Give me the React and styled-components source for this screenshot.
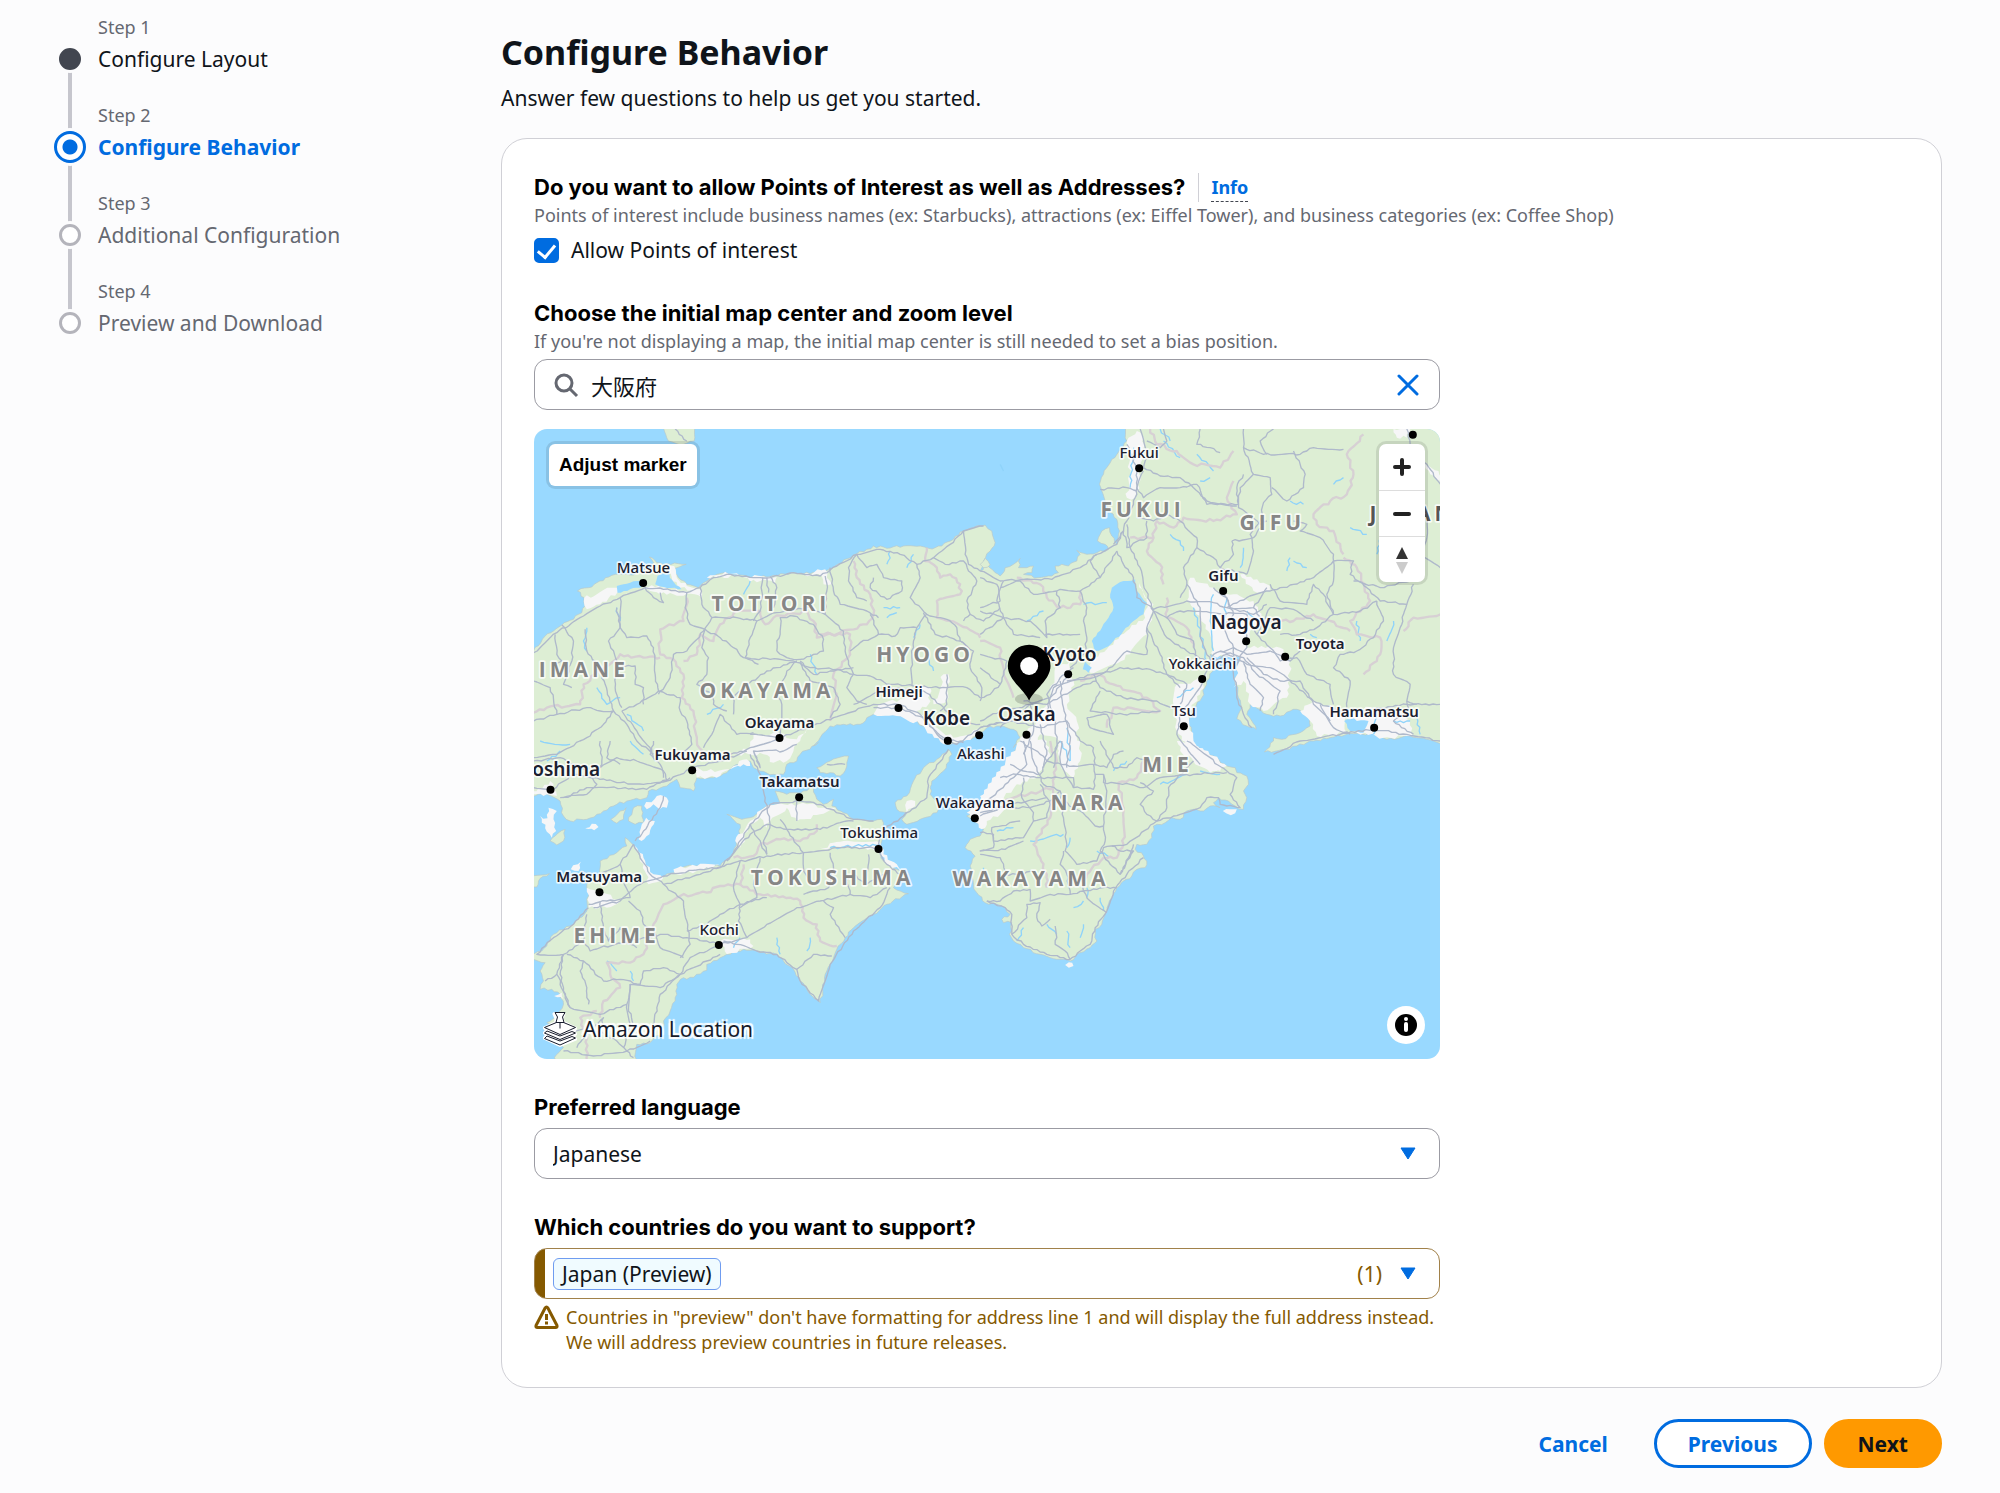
import { useState } from 'react';
import styled, { createGlobalStyle, css } from 'styled-components';

const steps = [
  { title: 'Configure Layout', status: 'done' },
  { title: 'Configure Behavior', status: 'current' },
  { title: 'Additional Configuration', status: 'todo' },
  { title: 'Preview and Download', status: 'todo' },
];

/* ---------- map data ---------- */

// The map is split in four quadrants, each with its own origin.
const parse = (text, dx = 0, dy = 0) =>
  text.trim().split(/\s+/).map((pair) => {
    const [x, y] = pair.split(',').map(Number);
    return [x + dx, y + dy];
  });
const nw = (text) => parse(text);
const ne = (text) => parse(text, 1380, 0);
const sw = (text) => parse(text, 0, 960);
const se = (text) => parse(text, 1380, 960);

// Breaks every segment into short pieces and nudges them, for a natural line
const roughen = (points, amount, closed) => {
  const out = [];
  const count = closed ? points.length : points.length - 1;
  for (let i = 0; i < count; i++) {
    const [x1, y1] = points[i];
    const [x2, y2] = points[(i + 1) % points.length];
    const length = Math.hypot(x2 - x1, y2 - y1);
    const parts = Math.max(1, Math.round(length / 11));
    for (let k = 0; k < parts; k++) {
      const t = k / parts;
      const seed = Math.sin(x1 * 12.9 + y1 * 78.2 + k * 37.7) * 43758.5;
      const nudge = k === 0 ? 0 : (seed - Math.floor(seed) - 0.5) * 2 * amount;
      const nx = length ? (y1 - y2) / length : 0;
      const ny = length ? (x2 - x1) / length : 0;
      out.push([x1 + (x2 - x1) * t + nx * nudge, y1 + (y2 - y1) * t + ny * nudge]);
    }
  }
  if (!closed) out.push(points[points.length - 1]);
  return out;
};
const toPath = (points, amount = 0, closed = false) =>
  'M' + roughen(points, amount, closed).map(([x, y]) => `${Math.round(x)} ${Math.round(y)}`).join('L') + (closed ? 'Z' : '');

const honshu = [
  ...nw('20,700 40,690 62,665 75,645 100,630 125,612 150,598 185,575 195,555 192,530 172,510 205,500 230,485 275,463 330,462 390,440 400,425 388,408 410,425 440,428 498,430 470,440 456,445 475,470 500,490 535,500 550,485 580,465 615,455 660,462 700,468 750,467 815,455 870,458 910,455 945,435 1000,402 1040,385 1060,375 1100,382 1150,375 1200,375 1225,382 1265,375 1300,355 1330,330 1360,320 1395,312 1415,330 1425,365 1410,390 1390,420 1405,430 1385,440'),
  ...ne('0,450 20,430 45,455 60,465 75,440 100,430 120,412 115,440 140,440 160,435 155,455 130,460 175,470 215,465 235,455 225,435 245,430 265,435 290,420 300,400 290,388 320,400 350,395 385,385 375,370 352,360 365,330 388,320 395,345 410,370 418,330 410,295 385,265 375,240 358,190 370,160 395,115 420,85 440,60 430,10 1400,10 1400,975 1340,955 1290,945 1220,955 1180,938 1120,938 1050,950 1000,960 950,975 915,985 853,993 880,960 880,950 905,955 960,935 990,915 985,885 950,865 930,870 900,885 860,880 830,862 810,850 800,880 815,900 828,925 800,915 770,893 785,860 775,830 765,780 780,740 790,700 760,710 720,705 690,700 700,740 680,780 665,830 635,870 625,900 635,940'),
  ...se('630,10 670,30 700,45 740,75 765,80 770,95 800,105 805,130 790,150 800,170 790,205 765,195 745,180 715,170 700,185 720,200 690,195 670,210 640,205 620,210 600,235 575,230 555,245 520,255 515,290 500,310 470,310 465,325 490,345 500,360 495,380 470,385 455,405 430,420 410,440 395,470 380,510 365,550 345,565 350,600 330,620 300,635 270,660 230,655 180,640 130,620 100,600 88,580 95,545 70,545 65,535 90,520 75,500 50,490'),
  ...sw('1395,485 1370,455 1360,430 1350,375 1365,345 1335,320 1350,295 1380,285 1390,265 1360,235 1340,225 1370,210 1400,170 1440,125'),
  ...se('90,70 95,40 120,0'),
  ...ne('100,980 120,950 100,925 60,915 20,920'),
  ...nw('1376,942 1330,960 1290,970 1270,965 1240,940 1210,915 1180,895 1140,885 1100,880 1060,880 1040,890 1020,910 970,910 930,915 900,950 880,975'),
  ...sw('895,5 840,40 830,60 800,70 790,100 760,100 720,90 700,80 690,60 640,75 620,95 570,110 530,110 520,150 480,140 470,115 440,135 385,150 380,170 320,180 290,190 250,210 230,220 200,235 150,240 130,225 120,180 80,160 20,165'),
];

const shikoku = sw('20,650 65,630 100,580 160,550 200,510 205,450 200,430 240,400 240,360 290,335 320,315 315,290 345,320 370,360 385,400 420,410 460,395 500,375 550,380 600,375 640,335 655,290 660,250 620,220 665,235 690,230 740,195 780,190 765,150 800,160 850,150 880,140 890,175 910,190 940,175 935,195 970,215 1000,235 1060,240 1085,235 1090,270 1085,300 1075,330 1090,360 1130,385 1165,400 1120,440 1165,458 1100,490 1060,520 1000,560 975,590 950,625 930,670 915,700 900,785 870,760 840,720 820,685 790,660 770,640 710,630 670,625 620,640 600,650 560,670 560,688 500,715 490,710 470,730 465,780 450,810 430,840 425,870 390,905 350,910 345,970 100,970 110,940 130,920 95,895 85,870 100,855 80,845 110,820 130,790 120,760 95,745 60,745 70,720 60,690 75,665 40,655');

const islands = [
  nw('430,10 525,10 522,60 490,70 445,60'),
  nw('1380,430 1395,412 1410,432 1390,440'),
  sw('1285,25 1295,40 1270,90 1235,120 1230,160 1260,190 1250,215 1200,235 1160,250 1145,235 1160,215 1130,205 1125,185 1160,165 1180,120 1210,80 1250,55'),
  sw('890,80 930,60 985,45 980,75 960,105 930,95 900,95'),
  sw('272,235 300,210 318,200 310,235 290,247'),
  sw('325,240 340,200 365,195 370,245 345,250'),
  sw('90,300 105,285 135,265 130,300 110,312'),
  sw('30,410 88,398 60,412 50,438 30,440'),
];

const sandyIslands = [
  sw('60,225 82,232 85,200 110,210 100,235 108,270 95,290 75,262'),
  sw('410,165 440,170 440,200 418,205 400,190 380,205 372,195'),
  sw('378,230 404,240 390,268 372,295 355,295 362,262'),
  sw('195,262 215,248 235,258 222,268'),
  sw('152,385 182,362 175,390'),
  sw('102,765 125,755 130,775'),
  se('728,210 770,205 765,217 738,217'),
  se('255,672 266,664 280,675 266,680'),
];

const lakes = [
  ne('395,500 430,480 465,475 470,510 500,545 490,580 460,600 430,630 400,660 375,680 345,690 335,660 365,620 385,590 400,560 390,530'),
  ne('315,722 335,740 325,755 308,745'),
  nw('290,495 330,485 372,478 368,495 330,505 292,515'),
  nw('405,490 412,465 440,452 462,485 484,505 430,498'),
  ne('1092,900 1120,890 1130,900 1165,900 1150,935 1110,930'),
];

const cityAreas = [
  nw('192,530 230,520 275,500 300,510 240,550 200,565'),
  nw('375,498 425,500 490,510 540,505 545,530 500,518 460,520 400,512'),
  nw('440,440 462,435 470,470 500,495 530,500 535,520 480,500 455,470'),
  nw('560,470 615,452 660,465 600,465'),
  nw('670,468 770,468 765,485 740,478 690,482'),
  nw('850,460 915,445 935,490 910,490 905,465'),
  nw('640,1000 690,975 700,940 760,935 830,955 860,925 840,960 820,990 800,1020 760,1025 730,1000'),
  nw('1060,880 1075,850 1140,835 1200,800 1230,800 1225,850 1190,870 1250,920 1300,950 1380,925 1380,942 1330,960 1270,970 1200,910 1130,885'),
  nw('1240,850 1270,760 1285,760 1280,840'),
  ne('440,60 470,30 490,50 480,180 465,230 440,230 450,160'),
  ne('470,475 490,520 520,550 500,640 450,700 400,730 330,755 335,720 380,685 440,630 495,590 500,545'),
  ne('225,740 270,720 280,780 260,850 290,900 295,1000 270,1030 240,1000 230,950 180,940 165,1030 130,1030 120,950 170,900 210,840'),
  ne('630,470 700,500 760,520 820,540 850,600 810,630 800,680 900,680 930,720 920,830 850,870 810,850 790,780 760,800 780,710 700,705 690,640 640,560 620,540'),
  ne('780,460 860,490 880,510 820,510'),
  ne('590,790 640,780 680,760 660,820 620,880 640,960 690,1010 730,1030 720,1050 640,1010 590,930 580,850'),
  ne('960,870 1000,840 1060,860 1090,870 1100,935 1010,945 990,900'),
  ne('1090,870 1180,860 1250,870 1290,900 1300,945 1210,950 1130,935'),
  ne('1240,24 1290,24 1280,50 1250,50'),
  ne('1335,130 1375,150 1385,190 1350,160'),
  sw('520,80 560,90 620,85 680,55 690,75 640,75 600,105 530,110'),
  sw('200,440 250,455 300,480 260,500 205,500'),
  sw('345,315 375,360 400,400 430,410 385,430 370,370'),
  sw('460,385 540,368 600,372 540,388 470,400'),
  sw('645,300 690,240 740,195 790,190 860,190 950,205 900,220 830,240 800,200 750,240 740,260 720,230 690,250 660,320'),
  sw('900,320 970,300 1080,305 1090,340 1130,370 1165,400 1100,370 1075,325 1000,320'),
  sw('600,600 660,595 690,595 700,615 620,640'),
  sw('30,160 90,120 110,165 70,165'),
  sw('1160,180 1185,180 1185,195 1160,215'),
  sw('1340,215 1440,120 1500,60 1500,120 1430,190 1470,200 1400,240 1385,265 1360,235'),
  se('0,165 120,0 200,0 210,40 170,110 80,140 0,200'),
  se('235,0 300,0 300,60 280,110 240,70'),
  se('590,0 625,0 700,45 740,75 690,95 640,60 600,30'),
];

const roads = [
  // north west
  nw('40,695 110,635 180,590 240,555 300,530 375,500 430,505 500,515 540,500 580,470 620,460 700,470 750,470 820,455 900,465 950,435 1010,400 1080,385 1140,400 1190,430 1240,410 1290,370 1330,330 1390,315'),
  nw('375,500 400,530 430,545 420,515'),
  nw('105,640 110,700 125,720 100,730'),
  nw('195,625 200,690 235,740 255,790 280,870'),
  nw('125,612 160,660 155,720 130,790 155,800'),
  nw('290,560 300,620 265,660 290,720 285,800 305,860'),
  nw('300,530 300,620 320,650 380,645 400,680 405,760 415,810 385,830 350,850 305,870'),
  nw('40,780 90,800 110,880 40,900'),
  nw('110,880 200,860 240,870 280,870 250,910 200,950 110,1000 40,1010'),
  nw('280,870 320,910 350,960 400,1000'),
  nw('305,870 350,930 390,980 400,1010'),
  nw('415,810 440,820 480,830 480,870 500,900 515,970 470,1010'),
  nw('305,735 345,735 345,790 370,800 370,850'),
  nw('500,515 495,560 510,610 555,625 600,650 640,680 670,710 750,715 820,720 870,740 950,745 1000,760 1050,765 1110,790 1180,795 1280,800 1340,800 1380,830'),
  nw('540,500 545,550 575,590 650,590 710,600 770,575 870,560 915,580'),
  nw('710,600 690,650 675,710 715,730'),
  nw('575,590 550,630 500,690 460,700 450,770 415,820'),
  nw('555,625 545,680 565,710 560,760 530,790 575,820 580,850 620,870'),
  nw('728,470 725,510 720,570 700,600'),
  nw('740,470 745,515'),
  nw('770,690 800,710 840,715 910,690 910,655 880,610 820,585 780,590 780,640 770,660 770,690'),
  nw('915,465 920,510 915,580 970,630 975,690 985,730 1000,760 980,800 1010,840 1040,850'),
  nw('750,467 770,500 760,560'),
  nw('1010,400 1040,440 1070,430 1090,470 1145,480 1145,510 1100,535 1050,500 1060,470'),
  nw('1010,400 985,440 985,480 1010,530 1040,540'),
  nw('930,440 940,510 960,550 1040,570 1075,590'),
  nw('1190,430 1200,470 1170,530 1220,580 1280,595 1310,620 1320,660 1345,680'),
  nw('1240,410 1275,430 1330,420 1345,450 1370,480 1340,540 1350,580 1330,600'),
  nw('1330,330 1335,400 1345,430 1380,450'),
  nw('1350,580 1390,600 1440,560'),
  nw('1220,580 1190,620 1180,660 1175,710 1175,795'),
  nw('1050,580 1075,640 1125,645 1140,620 1190,620'),
  nw('1075,640 1020,665 990,690'),
  nw('1210,575 1245,640 1290,650 1320,660 1360,690 1350,740 1385,800 1380,840'),
  nw('780,940 785,850 770,820 800,750 830,720'),
  nw('640,880 640,830 670,800 740,750 830,720'),
  nw('840,720 880,760 930,750 1000,740'),
  nw('840,725 870,780 940,800 960,850 930,890'),
  nw('700,935 650,940 600,880 580,930 550,980'),
  nw('690,940 780,950 860,920 940,890 1060,850 1135,850 1200,880 1260,950 1310,970 1380,920 1440,905'),
  nw('1060,860 1135,860 1210,890 1270,950 1330,965'),
  nw('1000,850 1100,800 1210,810 1260,850 1310,900 1380,910'),
  nw('1280,760 1280,850 1260,870'),
  nw('630,1000 680,985 780,950'),
  nw('465,24 500,60'),
  // north east
  ne('440,70 470,140 470,220 440,300 410,370 350,400 300,440 215,475 130,475 60,480 0,450'),
  ne('480,24 500,100 490,140 540,165 600,170 640,200 680,240 770,255'),
  ne('500,60 540,80 560,60 550,24'),
  ne('660,24 650,70 690,80 720,95'),
  ne('490,150 470,200 490,230 540,200 600,200 650,190 680,250 775,250 770,200 790,160'),
  ne('360,205 440,200 470,210'),
  ne('790,24 790,80 820,160 870,170 875,220 850,245 840,300 810,340 820,390 800,460'),
  ne('790,80 850,100 960,100 1000,80 1090,85'),
  ne('860,100 840,60 880,24'),
  ne('820,160 780,200 775,260 840,310 860,300'),
  ne('875,200 920,240 970,200 975,160 940,90'),
  ne('470,290 520,300 560,280 600,300 650,350 650,380 700,410 720,440 800,460'),
  ne('500,300 500,350 440,380 430,330 400,370'),
  ne('440,310 450,380 480,440 490,490 520,570 500,620 500,700 440,690 380,750 300,770 220,800 200,870'),
  ne('410,390 430,430 460,470 470,530 520,565 620,540 700,545 740,560 820,560 860,500'),
  ne('520,570 560,590 600,570 690,575 800,580 830,640'),
  ne('0,560 60,540 50,490 0,470'),
  ne('70,480 50,540 70,590 100,640 180,650'),
  ne('70,590 0,640'),
  ne('60,500 120,480 160,520 240,505 300,510 360,470 410,390'),
  ne('0,570 70,590 150,600 200,650 195,600 240,560 230,510'),
  ne('300,510 320,560 310,600 320,660 310,700 270,740'),
  ne('360,470 330,420 350,400'),
  ne('195,640 260,640 300,640'),
  ne('650,380 610,440 620,490 600,530'),
  ne('755,360 760,400 720,440'),
  ne('755,360 820,350 850,310'),
  ne('940,300 980,310 960,330 1020,350 1060,400 1060,420 1000,470 940,490 870,510 800,530 740,560'),
  ne('1060,420 1120,420 1110,460 1160,500 1200,540 1280,550 1300,490'),
  ne('870,490 900,540 980,550 1000,490 1030,520 1060,580 1140,570 1190,540'),
  ne('1060,420 1060,480 1040,520 1060,580 1010,620 960,640 900,640'),
  ne('1280,550 1260,620 1240,680 1240,760 1290,790 1280,840 1310,850'),
  ne('1190,540 1210,600 1180,650 1130,690 1080,700 1060,740 1110,780 1100,860'),
  ne('1345,290 1340,350 1325,400 1381,440'),
  ne('1325,400 1310,450 1290,480 1200,500 1120,480'),
  ne('820,560 850,600 870,560 940,565 1000,600'),
  ne('850,600 830,640 870,680 900,720 950,710 980,760 1050,790 1060,850'),
  ne('620,490 660,560 660,640 690,720 700,700 760,680 800,700 870,690 930,720 960,690'),
  ne('700,500 740,530 760,580 730,620 760,680 760,740 800,680 800,620'),
  ne('730,510 750,560 820,580 860,550'),
  ne('720,690 790,710 830,760 900,810 880,880'),
  ne('700,720 740,700 800,730 870,740 920,770 1000,840 1080,870 1180,865 1280,850 1381,850'),
  ne('790,720 810,790 850,830 840,870'),
  ne('800,710 850,760 900,780 960,780 1000,850 1050,900'),
  ne('760,740 770,830 790,880 815,920'),
  ne('690,720 665,790 630,840 600,880 590,940 620,980 660,1030'),
  ne('520,570 560,650 620,690 680,720'),
  ne('560,590 590,640 640,660 650,720'),
  ne('500,620 540,700 560,760 620,790 600,850'),
  ne('260,780 340,770 420,740 510,745 560,760 600,800'),
  ne('340,760 360,800 430,830 530,840 590,870'),
  ne('360,810 330,870 430,880 540,870'),
  ne('320,890 380,880 400,940 330,920 320,890'),
  ne('220,880 200,820 240,770 280,740'),
  ne('130,840 200,850 290,800 350,780'),
  ne('60,920 150,850 210,830 260,770'),
  ne('0,920 90,900 180,920 260,900 300,960'),
  ne('0,740 60,790 30,820 0,830'),
  ne('0,700 80,720 60,790'),
  ne('0,900 60,870 160,850'),
  ne('180,910 200,1000 190,1040'),
  ne('220,880 230,960 220,1040'),
  ne('150,850 160,930 130,1000'),
  ne('240,780 250,860 270,960 260,1040'),
  ne('880,1000 960,960 1080,940 1180,925 1280,940 1381,960'),
  ne('1020,850 1060,920 1110,940'),
  ne('1280,840 1290,870 1240,900 1300,940'),
  ne('1280,24 1290,70 1340,130 1381,190'),
  // south west
  sw('40,140 90,150 160,100 230,110 300,125 370,130 440,120 520,80 600,60 680,30'),
  sw('40,60 120,50 200,90 230,130 200,160 120,170'),
  sw('130,170 200,140 260,140 380,145 450,110'),
  sw('240,0 245,60 230,110'),
  sw('240,80 290,50 350,60 430,90 440,120'),
  sw('270,0 260,50 300,70'),
  sw('400,0 390,40 420,70 430,110'),
  sw('690,40 720,100 735,170 750,250'),
  sw('700,30 720,80 700,30 790,30 830,10'),
  sw('240,400 300,370 340,310'),
  sw('345,300 370,270 420,200 430,165'),
  sw('300,370 310,420 330,470 260,480 205,490'),
  sw('340,310 390,400 430,430 540,400 620,370 740,345 850,335 960,320 1075,320'),
  sw('220,500 300,480 360,430 430,405 540,385 600,380 640,335 690,250 750,190 840,180 900,190 1000,235 1060,240'),
  sw('620,360 690,280 740,250 800,265 900,265 960,245 1000,240'),
  sw('690,250 740,340'),
  sw('750,250 730,300 740,340'),
  sw('780,235 800,265 830,310 850,335 850,380 870,430'),
  sw('830,180 830,240'),
  sw('930,335 940,380 925,440 890,450 850,460'),
  sw('660,360 640,440 660,490 655,540 680,590'),
  sw('720,350 700,430 710,470 660,500'),
  sw('430,430 490,480 500,540 510,610 480,650'),
  sw('325,480 360,510 370,550 400,570 420,620 490,650'),
  sw('205,500 160,550 100,590 50,640 130,640 190,600 200,520'),
  sw('240,480 250,560 265,600 300,560 310,600 350,620'),
  sw('190,600 210,630 240,620 330,600 370,590 420,580 500,590 560,600 600,610'),
  sw('500,570 560,550 600,520 660,490 740,470'),
  sw('600,610 680,590 740,550 830,500 900,480 990,460 1050,470 1100,440'),
  sw('610,600 650,610 710,630 770,640 800,665 830,685 840,720 895,780 930,670 1000,570 1080,500 1110,440'),
  sw('830,685 880,640 935,645'),
  sw('910,480 940,500 930,520 960,570 975,590'),
  sw('990,460 980,420 1000,400 1040,430 1090,400'),
  sw('1040,430 1045,340'),
  sw('130,640 110,700 150,800 240,820 320,790 330,730 420,740 480,700 600,640'),
  sw('140,640 190,660 250,720 300,715 360,730 370,690 430,680 480,700'),
  sw('130,640 120,700 130,750 150,800'),
  sw('190,660 180,690 200,740 205,790'),
  sw('330,730 325,800 340,860 400,860 410,800 420,760 480,700 510,650 590,615'),
  sw('150,870 220,860 250,830 240,870 290,900 320,930 340,950'),
  sw('320,790 330,850 310,920'),
  sw('110,700 75,720'),
  sw('130,930 220,945 320,930 390,900'),
  sw('170,920 200,880 240,870'),
  sw('1285,25 1225,110 1220,170 1150,225 1085,270 1070,320 1100,370 1140,400'),
  sw('920,70 975,70'),
  // south east
  se('150,0 160,60 190,130 240,150 250,230 260,310 255,330 290,370 350,360 370,320 440,310 530,240 560,200 565,140 620,80 640,60'),
  se('120,0 180,40 200,60 280,75 340,70 380,80 400,40 430,30'),
  se('90,70 130,90 180,100 200,60 230,20 240,0'),
  se('60,110 110,100 170,110 280,110 280,140 340,145 345,100'),
  se('340,70 345,100 370,100 370,125 450,130 490,140 540,110 640,100 740,95'),
  se('245,0 240,60 260,110 280,140'),
  se('300,0 340,20 345,70'),
  se('360,0 400,80 440,80 470,50 500,60'),
  se('480,125 520,150 480,190 500,220 530,240'),
  se('530,240 600,220 660,200 680,170 715,170 720,190 780,200 750,160 770,110 740,90 620,0'),
  se('20,180 100,110 140,70 130,0'),
  se('0,225 60,200 150,200 210,180 240,150'),
  se('0,215 90,190 200,170'),
  se('130,110 125,170 160,215 160,240 200,230 210,190 180,130'),
  se('250,180 300,210 345,255 370,255 380,150 370,100'),
  se('370,255 375,300 360,330 390,370 420,400'),
  se('160,240 130,290 40,300 35,260 120,240'),
  se('0,275 40,280 40,320 0,330 75,325 130,300'),
  se('0,340 60,350 75,390'),
  se('75,400 120,400 160,390'),
  se('395,315 420,330 460,330 420,400 450,340 460,310'),
  se('250,330 240,370 260,400 270,460'),
  se('20,480 60,480 100,450 150,445 150,480 210,460 270,460 310,450 330,480 380,515'),
  se('20,480 75,500 95,520 95,580 130,610 200,640 270,655 300,630 330,610 345,560 380,510 400,450 440,400 490,350'),
  se('95,580 140,530 140,490 180,485 170,530 185,555 210,535'),
  se('225,555 230,590 225,610 255,630 270,655'),
  se('310,450 370,440 410,440'),
  se('300,400 310,430 310,450'),
];

const borders = [
  nw('500,530 490,600 420,625 420,700 460,715 490,760 485,830 520,870 530,960 560,1020'),
  nw('420,710 370,710 300,700 250,740 190,790 180,850 80,860 40,875'),
  nw('490,720 530,700 540,640 580,660 600,610 650,570 720,570 735,610 760,590 860,570 880,600 890,650 960,635 1040,610 1060,580 1050,520 1010,470 1000,420'),
  nw('900,640 990,640 990,700 940,760 950,820 930,900'),
  nw('1220,380 1215,420 1250,440 1260,470 1290,460 1320,490 1320,520 1250,540 1250,590 1290,600 1340,620 1380,650'),
  ne('0,660 60,680 70,760 100,830'),
  ne('110,470 180,490 200,530 240,560 300,550 300,510'),
  ne('510,24 530,70 590,90 640,130 720,140 760,90'),
  ne('760,180 740,230 770,280 700,300 610,290 580,320 530,300 520,350 450,350'),
  ne('520,350 500,390 540,430 550,490'),
  ne('1150,40 1100,100 1120,160 1100,220 1050,240 1000,280 1010,310 1060,330 1090,400'),
  ne('1090,410 1130,440 1170,540 1110,600 1130,640 1200,650 1200,700 1150,760'),
  ne('560,530 560,590 620,620 640,680'),
  ne('850,600 940,600 1000,580 1110,630'),
  ne('300,780 350,760 400,790 500,830 540,870 400,860 380,920'),
  ne('1381,580 1300,590 1270,630'),
  se('210,0 230,60 220,130 210,230 160,310 180,350 200,400 200,440'),
  se('490,60 470,110 415,125 430,200 430,310 410,350 370,350 320,400 310,440'),
  se('0,190 100,170 220,140'),
  sw('640,350 700,345 720,310 780,295 840,300 890,270 890,250'),
  sw('670,370 660,430 600,435 560,455 480,465 430,490 400,550 370,640 330,665 260,665 270,700 300,740 250,780 240,830'),
  sw('660,430 720,460 810,470 840,480 850,530 890,550 900,600 950,615'),
  sw('230,810 180,830 200,880 200,960'),
];

const streams = [
  nw('200,620 190,660 200,690'), nw('290,560 300,600'), nw('320,880 370,930'), nw('230,800 260,850 300,830'),
  nw('690,480 670,520'), nw('1110,390 1100,430'), nw('1090,560 1140,560'), nw('1100,590 1130,575'),
  nw('560,880 610,850'), nw('1180,400 1160,440'), nw('1220,700 1240,750'), nw('870,700 890,760'), nw('1200,610 1180,650'),
  ne('570,340 600,360 610,390'), ne('930,410 920,450'), ne('940,420 980,440'), ne('1110,320 1160,340'), ne('1060,190 1090,170'),
  ne('540,24 570,60'), ne('650,100 700,150'), ne('660,180 690,170'), ne('790,380 780,440'), ne('1200,350 1190,400'),
  ne('1240,600 1220,660'), ne('1130,600 1140,660'), ne('310,550 380,545'), ne('140,600 190,570'), ne('640,560 680,720'),
  ne('700,520 690,600 700,690'), ne('740,530 730,620'), ne('1180,940 1190,870'), ne('1240,900 1290,900'), ne('1310,890 1320,940'),
  ne('460,80 450,200'), ne('550,60 600,110'), ne('930,240 970,250'), ne('800,570 840,600'), ne('590,830 640,800'), ne('260,920 270,1020'),
  ne('990,640 1010,650'), ne('1050,680 1080,660'), ne('60,130 70,150'),
  sw('60,0 150,10'), sw('80,60 120,30'), sw('260,660 290,690'), sw('770,590 780,640'), sw('870,590 860,630'),
  sw('330,690 340,720'), sw('930,320 1080,310'), sw('330,0 370,40'), sw('1390,380 1380,410'), sw('660,590 640,620'),
  se('50,270 100,260'), se('150,300 200,290 250,280'), se('260,320 270,290'), se('350,330 390,350'), se('110,600 130,560'),
  se('260,570 270,620'), se('320,440 320,470'), se('280,500 310,480'), se('360,470 370,510'), se('540,130 620,100'), se('660,90 720,100'),
  se('200,550 230,580'), se('310,550 300,590'), se('240,0 270,60'), se('440,60 400,90'),
];

const cities = [
  { name: 'Matsue', x: 370, y: 455, dot: [369, 486] },
  { name: 'Himeji', x: 1137, y: 828, dot: [1135, 861], bold: true },
  { name: 'Kobe', x: 1279, y: 911, dot: [1283, 959], large: true },
  { name: 'Okayama', x: 778, y: 920, dot: [778, 951], bold: true },
  { name: 'Fukuyama', x: 517, y: 1017, dot: [516, 1048], bold: true },
  { name: 'Akashi', x: 1382, y: 1013, dot: [1377, 943] },
  { name: 'oshima', x: 138, y: 1066, dot: [91, 1106], large: true },
  { name: 'Takamatsu', x: 838, y: 1098, dot: [837, 1129], bold: true },
  { name: 'Tokushima', x: 1077, y: 1252, dot: [1075, 1284] },
  { name: 'Matsuyama', x: 237, y: 1384, dot: [238, 1414], bold: true },
  { name: 'Kochi', x: 597, y: 1541, dot: [596, 1572] },
  { name: 'Wakayama', x: 1365, y: 1161, dot: [1364, 1192] },
  { name: 'Fukui', x: 1857, y: 111, dot: [1857, 142] },
  { name: 'Gifu', x: 2110, y: 479, dot: [2109, 510], bold: true },
  { name: 'Nagoya', x: 2178, y: 625, dot: [2178, 661], large: true },
  { name: 'Toyota', x: 2400, y: 685, dot: [2295, 707], bold: true },
  { name: 'Kyoto', x: 1648, y: 720, dot: [1644, 760], large: true },
  { name: 'Yokkaichi', x: 2047, y: 743, dot: [2046, 774] },
  { name: 'Tsu', x: 1991, y: 884, dot: [1991, 916] },
  { name: 'Osaka', x: 1520, y: 901, dot: [1519, 941], large: true },
  { name: 'Hamamatsu', x: 2562, y: 889, dot: [2562, 920], bold: true },
];

const prefectures = [
  { name: 'TOTTORI', x: 574, y: 569 },
  { name: 'IMANE', x: 56, y: 768 },
  { name: 'HYOGO', x: 1068, y: 723 },
  { name: 'OKAYAMA', x: 538, y: 830 },
  { name: 'FUKUI', x: 1741, y: 288 },
  { name: 'GIFU', x: 2158, y: 327 },
  { name: 'TOKUSHIMA', x: 692, y: 1391 },
  { name: 'WAKAYAMA', x: 1297, y: 1395 },
  { name: 'EHIME', x: 160, y: 1567 },
  { name: 'MIE', x: 1866, y: 1053 },
  { name: 'NARA', x: 1591, y: 1166 },
];

const MapDrawing = () => (
  <MapSvg viewBox="40 24 2721 1890" preserveAspectRatio="xMidYMid slice" role="img" aria-label="Map centered on Osaka">
    <rect x="-600" y="-600" width="4000" height="3200" fill="#99d9ff" />
    <g fill="#ddeed4" stroke="#b9c9c9" strokeWidth="2">
      {[honshu, shikoku, ...islands].map((shape, i) => (
        <path key={i} d={toPath(shape, 4, true)} />
      ))}
    </g>
    <g fill="#f6f6f7">
      {[...cityAreas, ...sandyIslands].map((shape, i) => (
        <path key={i} d={toPath(shape, 6, true)} />
      ))}
    </g>
    <g fill="#99d9ff">
      {lakes.map((shape, i) => (
        <path key={i} d={toPath(shape, 3, true)} />
      ))}
    </g>
    <g fill="none" strokeLinejoin="round">
      {streams.map((line, i) => (
        <path key={i} d={toPath(line, 5)} stroke="#8fd3fa" strokeWidth="4" />
      ))}
      {borders.map((line, i) => (
        <path key={i} d={toPath(line, 5)} stroke="#d7d0d4" strokeWidth="7" />
      ))}
      {roads.map((line, i) => (
        <path key={i} d={toPath(line, 3)} stroke="#afb9cb" strokeWidth="4" />
      ))}
    </g>
    {prefectures.map(({ name, x, y }) => (
      <PrefectureName key={name} x={x} y={y}>{name}</PrefectureName>
    ))}
    <CountryName x="2548" y="300">JAPAN</CountryName>
    <circle cx="2678" cy="41" r="12" />
    {cities.map(({ name, x, y, dot, large, bold }) => (
      <g key={name}>
        <circle cx={dot[0]} cy={dot[1]} r="12" />
        <CityName x={x} y={y} $large={large} $bold={bold}>{name}</CityName>
      </g>
    ))}
    <ellipse cx="1526" cy="834" rx="42" ry="18" fill="#000" opacity="0.16" />
    <path
      d="M1527 839C1512 806 1463 776 1463 735A64 64 0 0 1 1591 735C1591 776 1542 806 1527 839Z"
      fill="#000"
    />
    <circle cx="1527" cy="735" r="27" fill="#fff" />
  </MapSvg>
);

/* ---------- icons ---------- */

const SearchIcon = () => (
  <svg width="26" height="26" viewBox="0 0 26 26" fill="none" stroke="#656871" strokeWidth="3" aria-hidden="true">
    <circle cx="11" cy="11" r="8" />
    <path d="M17 17L24 24" />
  </svg>
);

const CloseIcon = () => (
  <svg width="22" height="22" viewBox="0 0 22 22" stroke="#006ce0" strokeWidth="3" strokeLinecap="round" aria-hidden="true">
    <path d="M2 2L20 20M20 2L2 20" />
  </svg>
);

const CaretIcon = () => (
  <svg width="16" height="13" viewBox="0 0 16 13" fill="#006ce0" stroke="#006ce0" strokeLinejoin="round" aria-hidden="true">
    <path d="M1 1H15L8 12Z" />
  </svg>
);

const WarningIcon = () => (
  <svg width="25" height="25" viewBox="0 0 25 25" fill="none" stroke="#855900" strokeWidth="3" strokeLinejoin="round" aria-hidden="true">
    <path d="M11 3.200Q12.500 1 14 3.200L23 20.500Q23.500 22.500 21.500 22.500H3.500Q1.500 22.500 2 20.500Z" />
    <path d="M12.500 9V15M12.500 16.500V19.500" />
  </svg>
);

const LocationLogo = () => (
  <svg width="36" height="36" viewBox="0 0 36 36" aria-hidden="true">
    <g fill="#fff" stroke="#fff" strokeWidth="4" strokeLinejoin="round">
      <path d="M12.500 3H21.500L19.500 7.500L21 11.500L33 17.500L31 21L33 23L31 26L33 28L18 34L3 27L5 25L3 22L5 20L3 17L14 12L14.500 7.500Z" />
    </g>
    <g fill="#fff" stroke="#161b2b" strokeWidth="1" strokeLinejoin="round">
      <path d="M5 25L2.500 27.500L18 34L33.500 27L30 25.500L18 30Z" />
      <path d="M5 20L2.500 22L18 28.500L33.500 22L30 20.500L18 25Z" />
      <path d="M18 10L2.500 16.500L18 23.500L33.500 16.500Z" />
      <path d="M13 1.500H23L20.500 6L22 11.500H14L15.500 6Z" />
      <path d="M18 11.500V17.500" />
    </g>
  </svg>
);

/* ---------- page ---------- */

const StepList = () => (
  <Steps aria-label="Steps">
    <ol>
      {steps.map(({ title, status }, i) => (
        <Step key={title} $first={i === 0} aria-current={status === 'current' ? 'step' : undefined}>
          {i > 0 ? <StepLine /> : <span />}
          <StepNumber>Step {i + 1}</StepNumber>
          <StepMarker $status={status} />
          <StepTitle $status={status}>{title}</StepTitle>
        </Step>
      ))}
    </ol>
  </Steps>
);

const App = () => {
  const [allowPoi, setAllowPoi] = useState(true);
  const [place, setPlace] = useState('大阪府');

  return (
    <>
      <GlobalStyle />
      <Page>
        <StepList />
        <Main>
          <Title>Configure Behavior</Title>
          <Subtitle>Answer few questions to help us get you started.</Subtitle>

          <Card>
            <Field>
              <LabelRow>
                <Label as="h2">Do you want to allow Points of Interest as well as Addresses?</Label>
                <InfoWrapper>
                  <InfoLink href="#info">Info</InfoLink>
                </InfoWrapper>
              </LabelRow>
              <Description>
                Points of interest include business names (ex: Starbucks), attractions (ex: Eiffel Tower), and business categories (ex: Coffee Shop)
              </Description>
              <CheckboxLabel>
                <Checkbox type="checkbox" checked={allowPoi} onChange={(e) => setAllowPoi(e.target.checked)} />
                Allow Points of interest
              </CheckboxLabel>
            </Field>

            <Field>
              <Label htmlFor="place">Choose the initial map center and zoom level</Label>
              <Description>If you're not displaying a map, the initial map center is still needed to set a bias position.</Description>
              <Control>
                <SearchIcon />
                <SearchInput id="place" value={place} onChange={(e) => setPlace(e.target.value)} />
                <ClearButton type="button" aria-label="Clear" onClick={() => setPlace('')}>
                  <CloseIcon />
                </ClearButton>
              </Control>
              <MapFrame>
                <MapDrawing />
                <AdjustButton type="button">Adjust marker</AdjustButton>
                <ZoomControls>
                  <ZoomButton type="button" aria-label="Zoom in">
                    <svg width="20" height="20" viewBox="0 0 20 20" stroke="#222" strokeWidth="4" strokeLinecap="round">
                      <path d="M10 3V17M3 10H17" />
                    </svg>
                  </ZoomButton>
                  <ZoomButton type="button" aria-label="Zoom out">
                    <svg width="20" height="20" viewBox="0 0 20 20" stroke="#222" strokeWidth="4" strokeLinecap="round">
                      <path d="M3 10H17" />
                    </svg>
                  </ZoomButton>
                  <ZoomButton type="button" aria-label="Reset bearing to north">
                    <svg width="12" height="28" viewBox="0 0 12 28">
                      <path d="M0 13L6 1L12 13Z" fill="#333" />
                      <path d="M0 16L6 28L12 16Z" fill="#ccc" />
                    </svg>
                  </ZoomButton>
                </ZoomControls>
                <Brand>
                  <LocationLogo />
                  Amazon Location
                </Brand>
                <AttributionButton type="button" aria-label="Toggle attribution">
                  <svg width="24" height="24" viewBox="0 0 24 24">
                    <circle cx="12" cy="12" r="11" />
                    <circle cx="12" cy="6" r="2" fill="#fff" />
                    <rect x="10" y="9" width="4" height="10" rx="2" fill="#fff" />
                  </svg>
                </AttributionButton>
              </MapFrame>
            </Field>

            <Field>
              <Label htmlFor="language">Preferred language</Label>
              <SelectControl>
                <Select id="language" defaultValue="Japanese">
                  <option>Japanese</option>
                  <option>English</option>
                </Select>
                <CaretIcon />
              </SelectControl>
            </Field>

            <Field>
              <Label as="h2" id="countries">Which countries do you want to support?</Label>
              <CountryButton type="button" aria-labelledby="countries" aria-haspopup="listbox">
                <Token>Japan (Preview)</Token>
                <Count>(1)</Count>
                <CaretIcon />
              </CountryButton>
              <Warning>
                <WarningIcon />
                <span>
                  Countries in "preview" don't have formatting for address line 1 and will display the full address instead.
                  <br />
                  We will address preview countries in future releases.
                </span>
              </Warning>
            </Field>
          </Card>

          <Actions>
            <Button type="button">Cancel</Button>
            <Button type="button" $variant="outline">Previous</Button>
            <Button type="button" $variant="primary">Next</Button>
          </Actions>
        </Main>
      </Page>
    </>
  );
};

export default App;

const GlobalStyle = createGlobalStyle`
  * {
    box-sizing: border-box;
  }

  body {
    margin: 0;
    background: #fcfcfd;
    color: #0f141a;
    font-family: 'Noto Sans', 'Noto Sans CJK JP', sans-serif;
    font-size: 21px;
  }

  button, input, select {
    font: inherit;
    color: inherit;
  }
`;

const Page = styled.div`
  display: grid;
  grid-template-columns: 447px minmax(0, 1fr);
  padding: 0 58px 24px 54px;
`;

const Steps = styled.nav`
  padding-top: 11px;

  ol {
    list-style: none;
    margin: 0;
    padding: 0;
  }
`;

const Step = styled.li`
  display: grid;
  grid-template-columns: 32px 1fr;
  grid-template-rows: ${({ $first }) => ($first ? '32px' : '56px')} 32px;
  column-gap: 12px;
  justify-items: start;
  align-items: center;
`;

const StepLine = styled.span`
  justify-self: center;
  align-self: stretch;
  width: 4px;
  margin: -16px 0;
  background: #c6c6cd;
`;

const StepNumber = styled.span`
  align-self: end;
  font-size: 18px;
  line-height: 32px;
  color: #656871;
`;

const StepMarker = styled.span`
  position: relative;
  justify-self: center;
  width: 22px;
  height: 22px;
  border: 3px solid #b4b4bb;
  border-radius: 50%;
  background: #fff;
  box-shadow: 0 0 0 3px #fcfcfd;

  ${({ $status }) => $status === 'done' && css`
    border-color: #424650;
    background: #424650;
  `}

  ${({ $status }) => $status === 'current' && css`
    width: 32px;
    height: 32px;
    border-color: #006ce0;
    background: radial-gradient(circle, #006ce0 0 7px, #fff 8px);
  `}
`;

const StepTitle = styled.span`
  line-height: 32px;
  color: ${({ $status }) => ({ done: '#0f141a', current: '#006ce0', todo: '#656871' })[$status]};
  font-weight: ${({ $status }) => ($status === 'current' ? 700 : 400)};
`;

const Main = styled.main`
  padding-top: 30px;
`;

const Title = styled.h1`
  margin: 0;
  font-size: 34px;
  line-height: 44px;
`;

const Subtitle = styled.p`
  margin: 8px 0 24px;
  line-height: 32px;
`;

const Card = styled.form`
  display: flex;
  flex-direction: column;
  gap: 33px;
  padding: 33px 32px 32px;
  border: 1px solid #d0d0d6;
  border-radius: 26px;
  background: #fff;
`;

const Field = styled.div`
  display: flex;
  flex-direction: column;
`;

const LabelRow = styled.div`
  display: flex;
  align-items: center;
  gap: 13px;
`;

const Label = styled.label`
  margin: 0;
  font-family: Inter, 'Liberation Sans', sans-serif;
  font-size: 22px;
  font-weight: 700;
  line-height: 30px;
  color: #000;
`;

const InfoWrapper = styled.span`
  padding-left: 12px;
  border-left: 1px solid #d0d0d6;
`;

const InfoLink = styled.a`
  display: block;
  border-bottom: 1px dashed #424650;
  font-size: 18px;
  font-weight: 700;
  line-height: 28px;
  color: #006ce0;
  text-decoration: none;
`;

const Description = styled.p`
  margin: 0;
  font-size: 18px;
  line-height: 26px;
  color: #656871;
`;

const CheckboxLabel = styled.label`
  display: flex;
  align-items: center;
  gap: 12px;
  margin-top: 8px;
  line-height: 29px;
`;

const Checkbox = styled.input`
  display: grid;
  place-content: center;
  width: 25px;
  height: 25px;
  margin: 0;
  border: 2px solid #8c8c94;
  border-radius: 5px;
  background: #fff;
  appearance: none;

  &:checked {
    border-color: #006ce0;
    background: #006ce0;
  }

  &:checked::after {
    content: '';
    width: 8px;
    height: 14px;
    margin-bottom: 3px;
    border: solid #fff;
    border-width: 0 3px 3px 0;
    transform: rotate(40deg);
  }
`;

const controlStyle = css`
  display: flex;
  align-items: center;
  width: calc((100% - 16px) * 2 / 3);
  height: 51px;
  border: 1px solid #9b9ba3;
  border-radius: 13px;
  background: #fff;
`;

const Control = styled.div`
  ${controlStyle}
  gap: 12px;
  margin-top: 5px;
  padding: 0 20px 0 18px;
`;

const SearchInput = styled.input`
  flex: 1;
  min-width: 0;
  padding: 0;
  border: 0;
  outline: 0;
  background: none;
  font-family: 'Noto Sans CJK JP', 'Noto Sans', sans-serif;
  font-size: 22px;
`;

const ClearButton = styled.button`
  display: flex;
  padding: 0;
  border: 0;
  background: none;
  cursor: pointer;
`;

const SelectControl = styled.div`
  ${controlStyle}
  margin-top: 6px;
  padding: 0 23px 0 18px;
`;

const Select = styled.select`
  flex: 1;
  border: 0;
  outline: 0;
  background: none;
  appearance: none;
`;

const MapFrame = styled.div`
  position: relative;
  width: calc((100% - 16px) * 2 / 3);
  height: 630px;
  margin-top: 19px;
  border-radius: 13px;
  overflow: hidden;
`;

const MapSvg = styled.svg`
  display: block;
  width: 100%;
  height: 100%;
`;

// Label sizes are in map units: three to a pixel
const mapText = css`
  paint-order: stroke;
  stroke: rgba(255, 255, 255, 0.8);
  stroke-width: 10px;
  stroke-linejoin: round;
`;

const CityName = styled.text`
  ${mapText}
  text-anchor: middle;
  fill: #1b2030;
  font-size: ${({ $large }) => ($large ? '57px' : '45px')};
  font-weight: ${({ $large, $bold }) => ($large || $bold ? 600 : 500)};
`;

const PrefectureName = styled.text`
  ${mapText}
  fill: #868686;
  font-family: 'Open Sans', sans-serif;
  font-size: 63px;
  font-weight: 700;
  letter-spacing: 12px;
`;

const CountryName = styled(PrefectureName)`
  fill: #555;
`;

const AdjustButton = styled.button`
  position: absolute;
  top: 15px;
  left: 15px;
  height: 42px;
  padding: 0 10px;
  border: 0;
  border-radius: 6px;
  background: #fff;
  box-shadow: 0 0 0 3px rgba(0, 0, 0, 0.1);
  font-family: 'Liberation Sans', sans-serif;
  font-size: 19px;
  font-weight: 700;
  color: #000;
`;

const ZoomControls = styled.div`
  position: absolute;
  top: 15px;
  right: 15px;
  width: 46px;
  border-radius: 7px;
  background: #fff;
  box-shadow: 0 0 0 3px rgba(0, 0, 0, 0.1);
`;

const ZoomButton = styled.button`
  display: flex;
  align-items: center;
  justify-content: center;
  width: 100%;
  height: 46px;
  padding: 0;
  border: 0;
  background: none;

  & + & {
    border-top: 1px solid #ddd;
  }
`;

const Brand = styled.div`
  position: absolute;
  left: 8px;
  bottom: 12px;
  display: flex;
  align-items: center;
  gap: 5px;
  line-height: 36px;
  color: #161b2b;
  text-shadow: 0 0 2px #fff, 2px 2px 1px #fff, -2px -2px 1px #fff, 2px -2px 1px #fff, -2px 2px 1px #fff;
`;

const AttributionButton = styled.button`
  position: absolute;
  right: 15px;
  bottom: 15px;
  display: flex;
  align-items: center;
  justify-content: center;
  width: 38px;
  height: 38px;
  padding: 0;
  border: 0;
  border-radius: 50%;
  background: #fff;
`;

const CountryButton = styled.button`
  ${controlStyle}
  margin-top: 6px;
  padding: 0 23px 0 18px;
  border-color: #a1814a;
  background: linear-gradient(to right, #855900 11px, #fff 11px) border-box;
`;

const Token = styled.span`
  margin-right: auto;
  padding: 0 8px;
  border: 1px solid #6f9cf0;
  border-radius: 6px;
  background: #f0fbff;
  line-height: 30px;
`;

const Count = styled.span`
  margin-right: 18px;
  color: #855900;
`;

const Warning = styled.p`
  display: flex;
  gap: 7px;
  margin: 6px 0 0;
  font-size: 18px;
  line-height: 25px;
  color: #855900;

  svg {
    flex: none;
  }
`;

const Actions = styled.div`
  display: flex;
  justify-content: flex-end;
  gap: 12px;
  margin-top: 31px;
`;

const Button = styled.button`
  height: 49px;
  padding: 0 31px;
  border: 3px solid transparent;
  border-radius: 25px;
  background: none;
  font-weight: 700;
  color: #006ce0;
  cursor: pointer;

  ${({ $variant }) => $variant === 'outline' && css`
    border-color: #006ce0;
    background: #fff;
  `}

  ${({ $variant }) => $variant === 'primary' && css`
    background: #ff9900;
    border-color: #ff9900;
    color: #0f141a;
  `}
`;
